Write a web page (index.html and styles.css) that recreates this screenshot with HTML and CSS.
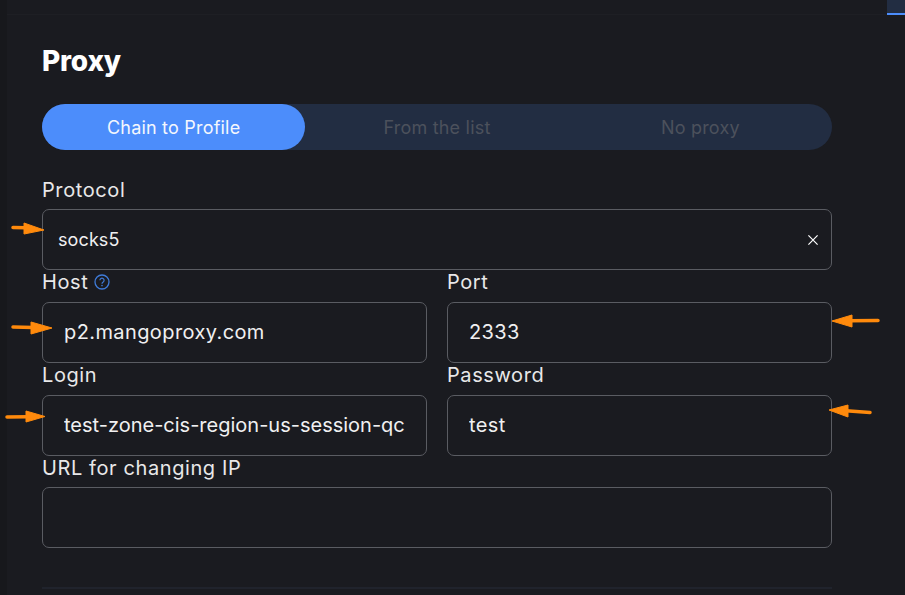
FILE: index.html
```html
<!DOCTYPE html>
<html lang="en">
<head>
<meta charset="utf-8">
<title>Proxy</title>
<link rel="stylesheet" href="styles.css">
</head>
<body>
<div class="app">
  <aside class="rail"></aside>
  <div class="main">
    <header class="topbar"><span class="top-tab"></span></header>
    <section class="panel">
      <h1 class="title">Proxy</h1>
      <div class="segments">
        <button class="segment active">Chain to Profile</button>
        <button class="segment">From the list</button>
        <button class="segment">No proxy</button>
      </div>
      <div class="field protocol-field">
        <label class="label">Protocol</label>
        <div class="select">
          <span class="select-value">socks5</span>
          <svg class="clear" width="10" height="10" viewBox="0 0 10 10"><path d="M0.4 0.4L9.6 9.6M9.6 0.4L0.4 9.6" stroke="#fff" stroke-width="1.2" fill="none"/></svg>
        </div>
      </div>
      <div class="grid">
        <div class="field">
          <label class="label">Host
            <svg class="help" width="16" height="16" viewBox="0 0 16 16"><circle cx="8" cy="8" r="7" stroke="#3f7bd8" stroke-width="1.3" fill="none"/><path d="M5.9 6.3a2.1 2.1 0 1 1 3.2 1.8c-.8.4-1.1.9-1.1 1.6" stroke="#3f7bd8" stroke-width="1.2" fill="none"/><circle cx="8" cy="11.6" r=".8" fill="#3f7bd8"/></svg>
          </label>
          <input class="input" value="p2.mangoproxy.com">
        </div>
        <div class="field">
          <label class="label">Port</label>
          <input class="input" value="2333">
        </div>
        <div class="field">
          <label class="label">Login</label>
          <input class="input input-long" value="test-zone-cis-region-us-session-qcmv82">
        </div>
        <div class="field">
          <label class="label">Password</label>
          <input class="input" value="test">
        </div>
      </div>
      <div class="field url-field">
        <label class="label">URL for changing IP</label>
        <input class="input">
      </div>
      <hr class="divider">
    </section>
  </div>
  <svg class="arrows" width="905" height="595" viewBox="0 0 905 595">
    <g class="arrow-shaft">
      <path d="M13 227.5L26 227.7"/>
      <path d="M13 327L33 327.5"/>
      <path d="M7 417L28 416.7"/>
      <path d="M878 320.5L850 320.7"/>
      <path d="M870 412.5L846 410.8"/>
    </g>
    <g class="arrow-head">
      <path d="M24 223L44 230L24 234Z"/>
      <path d="M31 322L52 328L31 334Z"/>
      <path d="M26 411L45 416.5L26 422Z"/>
      <path d="M852 315L832 321L852 327Z"/>
      <path d="M848 405L829 410L848 417Z"/>
    </g>
  </svg>
</div>
</body>
</html>
```
FILE: styles.css
```css
* { box-sizing: border-box; }
html, body { margin: 0; height: 100%; }
body {
  background: #1a1b20;
  color: #e8e8e9;
  font-family: "Inter", "Noto Sans", sans-serif;
  overflow: hidden;
}
.app { position: relative; display: flex; width: 905px; height: 595px; overflow: hidden; }
.rail { width: 7px; flex: none; background: #17181c; }
.main { flex: 1; min-width: 0; }
.topbar {
  height: 15px;
  display: flex;
  justify-content: flex-end;
  border-bottom: 1px solid #1e1f24;
}
.top-tab {
  width: 18px;
  height: 15px;
  background: #222d42;
  border-bottom: 2px solid #4c8dfb;
}
.panel { width: 825px; padding: 0 0 0 35px; }
.title {
  margin: 29px 0 0;
  font-size: 28px;
  line-height: 34px;
  font-weight: 800;
  color: #fff;
  letter-spacing: -0.2px;
}
.segments {
  display: grid;
  grid-template-columns: repeat(3, 1fr);
  height: 46px;
  margin-top: 26px;
  width: 790px;
  background: #222d42;
  border-radius: 23px;
}
.segment {
  border: 0;
  background: none;
  padding: 0;
  font: inherit;
  font-size: 18px;
  letter-spacing: 0.2px;
  color: #4c515c;
  border-radius: 23px;
}
.segment.active { background: #4c8dfb; color: #f4f7fd; }
.field { display: flex; flex-direction: column; min-width: 0; }
.protocol-field { margin-top: 28px; width: 790px; }
.label {
  display: flex;
  align-items: center;
  gap: 6px;
  height: 31px;
  padding-bottom: 7px;
  font-size: 20px;
  letter-spacing: 0.6px;
  line-height: 24px;
  color: #e8e8e9;
}
.grid .label { padding-bottom: 9px; }
.select, .input {
  height: 61px;
  border: 1px solid #5a5c62;
  border-radius: 7px;
  background: #1a1b20;
  color: #f0f0f1;
  font-family: inherit;
  font-size: 20px;
  letter-spacing: 0.4px;
}
.select {
  display: flex;
  align-items: center;
  justify-content: space-between;
  padding: 0 13px 0 15px;
}
.select-value { font-size: 18px; letter-spacing: 0.1px; }
.clear { flex: none; }
.input { width: 100%; padding: 0 21px 2px; outline: none; }
.input-long { letter-spacing: 0; }
.help { flex: none; }
.grid {
  display: grid;
  grid-template-columns: 385px 385px;
  column-gap: 20px;
  row-gap: 1px;
  margin-top: 1px;
}
.url-field { width: 790px; }
.divider {
  width: 790px;
  height: 2px;
  margin: 39px 0 0;
  border: 0;
  background: #20232c;
}
.arrows { position: absolute; left: 0; top: 0; pointer-events: none; }
.arrow-shaft path { fill: none; stroke: #ff8a0c; stroke-width: 3.5; stroke-linecap: round; }
.arrow-head path { fill: #ff8a0c; stroke: #ff8a0c; stroke-width: 1; stroke-linejoin: round; }
```
